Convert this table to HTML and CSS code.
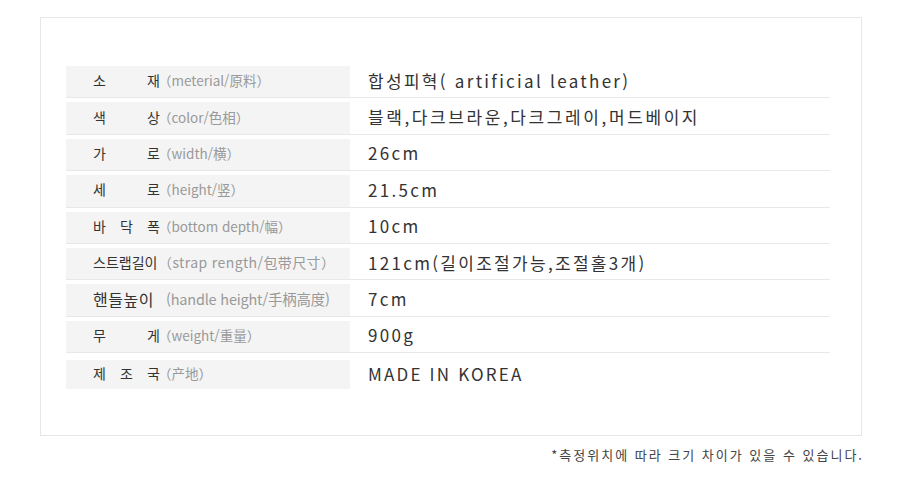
FILE: index.html
```html
<!DOCTYPE html>
<html lang="ko">
<head>
<meta charset="utf-8">
<link rel="stylesheet" href="styles.css">
</head>
<body>
<div class="page">
  <div class="box">
    <div class="spec">
      <div class="row">
        <div class="label"><span class="ko">소 재</span><span class="sub">（meterial/原料）</span></div>
        <div class="value">합성피혁( artificial leather)</div>
      </div>
      <div class="row">
        <div class="label"><span class="ko">색 상</span><span class="sub">（color/色相）</span></div>
        <div class="value ko-val">블랙,다크브라운,다크그레이,머드베이지</div>
      </div>
      <div class="row">
        <div class="label"><span class="ko">가 로</span><span class="sub">（width/横）</span></div>
        <div class="value">26cm</div>
      </div>
      <div class="row">
        <div class="label"><span class="ko">세 로</span><span class="sub">（height/竖）</span></div>
        <div class="value">21.5cm</div>
      </div>
      <div class="row">
        <div class="label"><span class="ko">바 닥 폭</span><span class="sub">（bottom depth/幅）</span></div>
        <div class="value">10cm</div>
      </div>
      <div class="row">
        <div class="label"><span class="ko">스트랩길이</span><span class="sub wide">（strap rength/包带尺寸）</span></div>
        <div class="value">121cm(길이조절가능,조절홀3개)</div>
      </div>
      <div class="row">
        <div class="label"><span class="ko big">핸들높이</span><span class="sub narrow">(handle height/手柄高度)</span></div>
        <div class="value">7cm</div>
      </div>
      <div class="row">
        <div class="label"><span class="ko">무 게</span><span class="sub">（weight/重量）</span></div>
        <div class="value">900g</div>
      </div>
      <div class="row last">
        <div class="label"><span class="ko">제 조 국</span><span class="sub">（产地）</span></div>
        <div class="value caps">MADE IN KOREA</div>
      </div>
    </div>
  </div>
  <p class="note">*측정위치에 따라 크기 차이가 있을 수 있습니다.</p>
</div>
</body>
</html>
```

FILE: styles.css
```css
* { box-sizing: border-box; }
html, body { margin: 0; padding: 0; background: #fff; }
body {
  font-family: "Noto Sans CJK KR", "Noto Sans", sans-serif;
  color: #333;
}
.page {
  padding: 17px 0 0 40px;
  width: 862px;
}
.box {
  width: 822px;
  height: 419px;
  border: 1px solid #e6e6e6;
  padding: 44px 0 0 25px;
}
.spec { width: 764px; }
.row {
  display: grid;
  grid-template-columns: 284px 1fr;
  padding-top: 4px;
  border-bottom: 1px solid #e8e8e8;
}
.row.last { border-bottom: none; padding-top: 7px; }
.row.last .label, .row.last .value { height: 29px; }
.label {
  height: 31.4px;
  background: #f4f4f4;
  display: flex;
  align-items: center;
  padding: 0 0 3px 27px;
  white-space: nowrap;
}
.ko {
  display: inline-block;
  width: 67px;
  font-size: 14px;
  color: #333;
  text-align: justify;
  text-align-last: justify;
}
.ko.big { font-size: 16px; letter-spacing: 0.5px; }
.sub {
  font-size: 13.5px;
  color: #999;
  margin-left: -2px;
}
.sub.wide { font-size: 14px; letter-spacing: 0.4px; }
.sub.narrow { margin-left: 6px; font-size: 14.5px; letter-spacing: -0.2px; }
.value {
  height: 31.4px;
  display: flex;
  align-items: center;
  padding: 0 0 3px 18px;
  font-size: 17px;
  letter-spacing: 2.3px;
  color: #333;
  white-space: nowrap;
}
.value.ko-val { letter-spacing: 2.6px; }
.value.caps { letter-spacing: 2.2px; }
.note {
  margin: 9px 0 0;
  width: 824px;
  text-align: right;
  font-size: 13px;
  letter-spacing: 2px;
  color: #444;
}
```
